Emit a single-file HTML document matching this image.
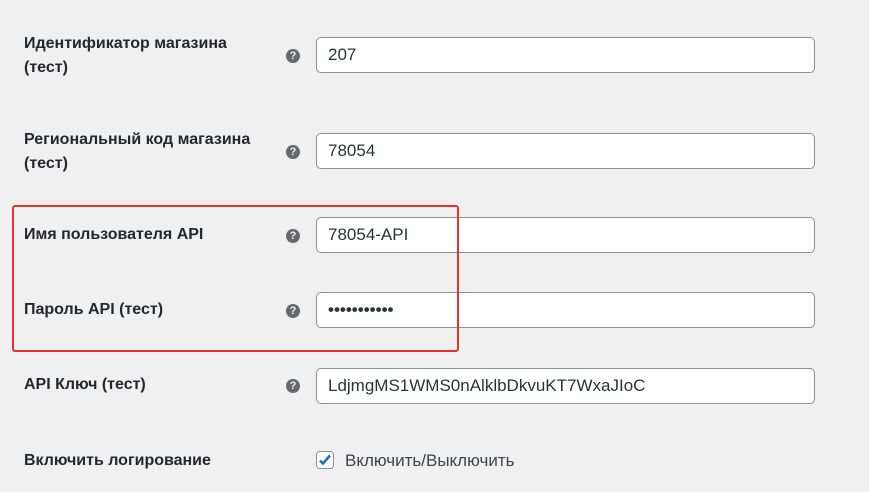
<!DOCTYPE html>
<html><head><meta charset="utf-8"><style>
body{margin:0;width:869px;height:492px;background:#f0f0f1;font-family:"Liberation Sans","DejaVu Sans",sans-serif;position:relative;overflow:hidden;color:#1d2327}
.l{position:absolute;left:24px;font-size:16px;font-weight:600;line-height:24px;color:#23282d}
.q{position:absolute;left:286px;width:14px;height:14px;border-radius:50%;background:#646970;color:#f0f0f1;font-size:11px;font-weight:bold;text-align:center;line-height:14px}
.i{position:absolute;left:316px;width:499px;height:36px;background:#fff;border:1px solid #8c8f94;border-radius:5px;font-size:17px;line-height:34px;padding-left:11px;box-sizing:border-box;color:#2c3338}
.red{position:absolute;left:12px;top:205px;width:443px;height:143px;border:2.5px solid #e3342f;border-radius:3px}
</style></head><body>
<div class="l" style="top:32px">Идентификатор магазина<br>(тест)</div>
<div class="q" style="top:49px">?</div>
<div class="i" style="top:37px">207</div>
<div class="l" style="top:128px">Региональный код магазина<br>(тест)</div>
<div class="q" style="top:145px">?</div>
<div class="i" style="top:133px">78054</div>
<div class="l" style="top:223px">Имя пользователя API</div>
<div class="q" style="top:229px">?</div>
<div class="i" style="top:217px">78054-API</div>
<div class="l" style="top:298px">Пароль API (тест)</div>
<div class="q" style="top:304px">?</div>
<div class="i" style="top:292px;font-size:17px;letter-spacing:0px;font-weight:bold">•••••••••••</div>
<div class="red"></div>
<div class="l" style="top:373px">API Ключ (тест)</div>
<div class="q" style="top:379px">?</div>
<div class="i" style="top:368px">LdjmgMS1WMS0nAlklbDkvuKT7WxaJIoC</div>
<div class="l" style="top:449px">Включить логирование</div>
<div style="position:absolute;left:316px;top:451px;width:18px;height:18px;border:1px solid #8c8f94;border-radius:4px;background:#fff;box-sizing:border-box">
<svg width="16" height="16" viewBox="0 0 16 16" style="position:absolute;left:0;top:0"><path d="M3 8.5l3 3 7-8" stroke="#2271b1" stroke-width="2.6" fill="none"/></svg></div>
<div style="position:absolute;left:345px;top:451px;font-size:17px;color:#3c434a">Включить/Выключить</div>
</body></html>
